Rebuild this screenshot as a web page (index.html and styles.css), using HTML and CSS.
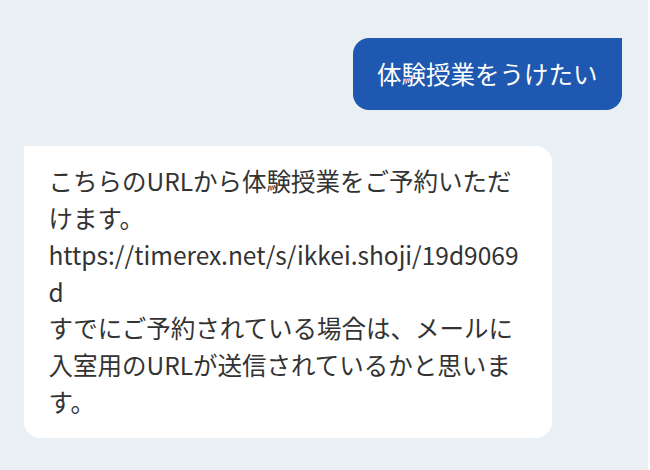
FILE: index.html
```html
<!DOCTYPE html>
<html lang="ja">
<head>
<meta charset="utf-8">
<link rel="stylesheet" href="styles.css">
</head>
<body>
<div class="chat">
  <div class="row row-user">
    <div class="bubble bubble-user">体験授業をうけたい</div>
  </div>
  <div class="row row-bot">
    <div class="bubble bubble-bot">こちらのURLから体験授業をご予約いただけます。<br>https://timerex.net/s/ikkei.shoji/19d9069d<br>すでにご予約されている場合は、メールに入室用のURLが送信されているかと思います。</div>
  </div>
</div>
</body>
</html>
```

FILE: styles.css
```css
html, body {
  margin: 0;
  padding: 0;
  background: #ffffff;
}

.chat {
  width: 648px;
  height: 470px;
  box-sizing: border-box;
  background: #eaeff4;
  padding: 38px 26px 0 24px;
  display: flex;
  flex-direction: column;
  gap: 36px;
  font-family: "Noto Sans CJK JP", "Noto Sans", sans-serif;
  font-size: 24.5px;
  line-height: 36.75px;
}

.row {
  display: flex;
}

.row-user {
  justify-content: flex-end;
}

.row-bot {
  justify-content: flex-start;
}

.bubble {
  padding: 17.5px 24.5px;
  border-radius: 16px;
  word-break: break-all;
}

.bubble-user {
  background: #1e58b0;
  color: #ffffff;
  border-top-right-radius: 0;
}

.bubble-bot {
  background: #ffffff;
  color: #333333;
  border-top-left-radius: 0;
  width: 528px;
  box-sizing: border-box;
}
```
